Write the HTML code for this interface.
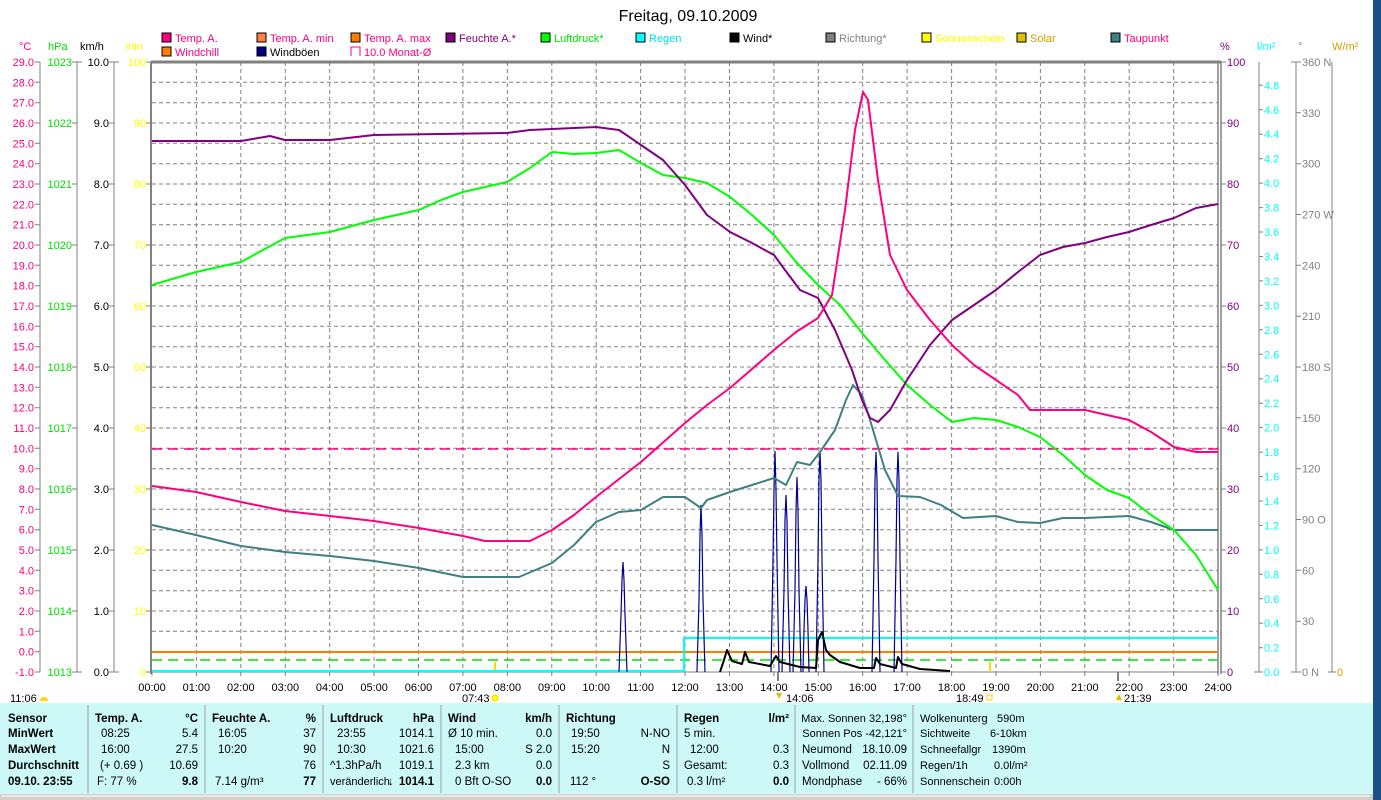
<!DOCTYPE html>
<html><head><meta charset="utf-8">
<style>
html,body{margin:0;padding:0;width:1381px;height:800px;overflow:hidden;background:#fff}
svg{display:block;font-family:"Liberation Sans",sans-serif}
</style></head><body>
<svg width="1381" height="800" viewBox="0 0 1381 800" xmlns="http://www.w3.org/2000/svg">
<rect x="1373" y="0" width="8" height="800" fill="#1a4f88"/>
<text x="688" y="21" font-size="16" text-anchor="middle" fill="#000">Freitag, 09.10.2009</text>
<!-- legend -->
<g font-size="11">
<rect x="162" y="33" width="9" height="9" fill="#ff0080" stroke="#000"/><text x="175" y="42" fill="#ff0080">Temp. A.</text>
<rect x="257" y="33" width="9" height="9" fill="#ff8040" stroke="#000"/><text x="270" y="42" fill="#ff0080">Temp. A. min</text>
<rect x="351" y="33" width="9" height="9" fill="#ff8000" stroke="#000"/><text x="364" y="42" fill="#ff0080">Temp. A. max</text>
<rect x="446" y="33" width="9" height="9" fill="#800080" stroke="#000"/><text x="459" y="42" fill="#800080">Feuchte A.*</text>
<rect x="541" y="33" width="9" height="9" fill="#00ff00" stroke="#000"/><text x="554" y="42" fill="#00e000">Luftdruck*</text>
<rect x="636" y="33" width="9" height="9" fill="#00ffff" stroke="#000"/><text x="649" y="42" fill="#00e0e0">Regen</text>
<rect x="730" y="33" width="9" height="9" fill="#000" stroke="#000"/><text x="743" y="42" fill="#000">Wind*</text>
<rect x="826" y="33" width="9" height="9" fill="#808080" stroke="#000"/><text x="839" y="42" fill="#808080">Richtung*</text>
<rect x="922" y="33" width="9" height="9" fill="#ffff00" stroke="#000"/><text x="935" y="42" fill="#ffff00">Sonnenschein</text>
<rect x="1017" y="33" width="9" height="9" fill="#e0c000" stroke="#000"/><text x="1030" y="42" fill="#d0a000">Solar</text>
<rect x="1111" y="33" width="9" height="9" fill="#408080" stroke="#000"/><text x="1124" y="42" fill="#ff0080">Taupunkt</text>
<rect x="162" y="47" width="9" height="9" fill="#ff8000" stroke="#000"/><text x="175" y="56" fill="#ff0080">Windchill</text>
<rect x="257" y="47" width="9" height="9" fill="#000080" stroke="#000"/><text x="270" y="56" fill="#000">Windböen</text>
<path d="M351 56V47h9v9" fill="none" stroke="#ff0080"/><text x="364" y="56" fill="#ff0080">10.0 Monat-Ø</text>
<text x="19" y="50" fill="#ff0080">°C</text><text x="48" y="50" fill="#00e000">hPa</text><text x="80" y="50" fill="#000">km/h</text><text x="125" y="50" fill="#ffff00">min</text>
<text x="1220" y="50" fill="#800080">%</text><text x="1257" y="50" fill="#00ffff">l/m²</text><text x="1298" y="50" fill="#808080">°</text><text x="1332" y="50" fill="#d0a000">W/m²</text>
</g>
<!-- grid -->
<g stroke="#808080" stroke-dasharray="4,3" stroke-width="1">
<path d="M152 82.3H1218M152 102.7H1218M152 123H1218M152 143.3H1218M152 163.7H1218M152 184H1218M152 204.3H1218M152 224.7H1218M152 245H1218M152 265.3H1218M152 285.7H1218M152 306H1218M152 326.3H1218M152 346.7H1218M152 367H1218M152 387.3H1218M152 407.7H1218M152 428H1218M152 448.3H1218M152 468.7H1218M152 489H1218M152 509.3H1218M152 529.7H1218M152 550H1218M152 570.3H1218M152 590.7H1218M152 611H1218M152 631.3H1218M152 651.7H1218"/>
<path d="M196.4 62V672M240.8 62V672M285.3 62V672M329.7 62V672M374.1 62V672M418.5 62V672M462.9 62V672M507.4 62V672M551.8 62V672M596.2 62V672M640.6 62V672M685 62V672M729.5 62V672M773.9 62V672M818.3 62V672M862.7 62V672M907.1 62V672M951.6 62V672M996 62V672M1040.4 62V672M1084.8 62V672M1129.2 62V672M1173.7 62V672"/>
</g>
<!-- axes -->
<g stroke="#808080" fill="none">
<path d="M151 62H1221" stroke-width="3"/>
<path d="M151 62V674" stroke-width="2"/>
<path d="M1218 62V674M1221 62V674" stroke-width="1.5"/>
<path d="M40 62V672M77 62V672M114 62V672M1259 62V672M1296 62V672M1332 62V672"/>
<path d="M152 672H1218"/>
<path d="M35 62h5M35 82.3h5M35 102.7h5M35 123h5M35 143.3h5M35 163.7h5M35 184h5M35 204.3h5M35 224.7h5M35 245h5M35 265.3h5M35 285.7h5M35 306h5M35 326.3h5M35 346.7h5M35 367h5M35 387.3h5M35 407.7h5M35 428h5M35 448.3h5M35 468.7h5M35 489h5M35 509.3h5M35 529.7h5M35 550h5M35 570.3h5M35 590.7h5M35 611h5M35 631.3h5M35 651.7h5M35 672h5"/>
<path d="M72 62h10M72 123h5M72 184h5M72 245h5M72 306h5M72 367h5M72 428h5M72 489h5M72 550h5M72 611h5M72 672h10"/>
<path d="M109 62h10M109 123h5M109 184h5M109 245h5M109 306h5M109 367h5M109 428h5M109 489h5M109 550h5M109 611h5M109 672h10"/>
<path d="M146 62h5M146 123h5M146 184h5M146 245h5M146 306h5M146 367h5M146 428h5M146 489h5M146 550h5M146 611h5M146 672h5"/>
<path d="M1221 62h5M1221 123h5M1221 184h5M1221 245h5M1221 306h5M1221 367h5M1221 428h5M1221 489h5M1221 550h5M1221 611h5M1221 672h5"/>
<path d="M1259 85.3h4M1259 109.8h4M1259 134.2h4M1259 158.7h4M1259 183.1h4M1259 207.6h4M1259 232h4M1259 256.5h4M1259 280.9h4M1259 305.4h4M1259 329.8h4M1259 354.3h4M1259 378.7h4M1259 403.2h4M1259 427.6h4M1259 452.1h4M1259 476.5h4M1259 501h4M1259 525.4h4M1259 549.9h4M1259 574.3h4M1259 598.8h4M1259 623.2h4M1259 647.7h4M1254 672h9"/>
<path d="M1291 62h10M1296 112.8h5M1296 163.7h5M1296 214.5h5M1296 265.3h5M1296 316.2h5M1296 367h5M1296 417.8h5M1296 468.7h5M1296 519.5h5M1296 570.3h5M1296 621.2h5M1291 672h10M1328 672h8"/>
<path d="M152 672v4M196.4 672v4M240.8 672v4M285.3 672v4M329.7 672v4M374.1 672v4M418.5 672v4M462.9 672v4M507.4 672v4M551.8 672v4M596.2 672v4M640.6 672v4M685 672v4M729.5 672v4M773.9 672v4M818.3 672v4M862.7 672v4M907.1 672v4M951.6 672v4M996 672v4M1040.4 672v4M1084.8 672v4M1129.2 672v4M1173.7 672v4M1218 672v4"/>
<path d="M778 672v9M1118 672v9" stroke-width="2"/>
</g>
<g font-size="11" text-anchor="end">
<g fill="#ff0080">
<text x="34" y="66">29.0</text><text x="34" y="86.3">28.0</text><text x="34" y="106.7">27.0</text><text x="34" y="127">26.0</text><text x="34" y="147.3">25.0</text><text x="34" y="167.7">24.0</text><text x="34" y="188">23.0</text><text x="34" y="208.3">22.0</text><text x="34" y="228.7">21.0</text><text x="34" y="249">20.0</text><text x="34" y="269.3">19.0</text><text x="34" y="289.7">18.0</text><text x="34" y="310">17.0</text><text x="34" y="330.3">16.0</text><text x="34" y="350.7">15.0</text><text x="34" y="371">14.0</text><text x="34" y="391.3">13.0</text><text x="34" y="411.7">12.0</text><text x="34" y="432">11.0</text><text x="34" y="452.3">10.0</text><text x="34" y="472.7">9.0</text><text x="34" y="493">8.0</text><text x="34" y="513.3">7.0</text><text x="34" y="533.7">6.0</text><text x="34" y="554">5.0</text><text x="34" y="574.3">4.0</text><text x="34" y="594.7">3.0</text><text x="34" y="615">2.0</text><text x="34" y="635.3">1.0</text><text x="34" y="655.7">0.0</text><text x="34" y="676">-1.0</text>
</g>
<g fill="#00e000">
<text x="72" y="66">1023</text><text x="72" y="127">1022</text><text x="72" y="188">1021</text><text x="72" y="249">1020</text><text x="72" y="310">1019</text><text x="72" y="371">1018</text><text x="72" y="432">1017</text><text x="72" y="493">1016</text><text x="72" y="554">1015</text><text x="72" y="615">1014</text><text x="72" y="676">1013</text>
</g>
<g fill="#000">
<text x="109" y="66">10.0</text><text x="109" y="127">9.0</text><text x="109" y="188">8.0</text><text x="109" y="249">7.0</text><text x="109" y="310">6.0</text><text x="109" y="371">5.0</text><text x="109" y="432">4.0</text><text x="109" y="493">3.0</text><text x="109" y="554">2.0</text><text x="109" y="615">1.0</text><text x="109" y="676">0.0</text>
</g>
<g fill="#ffff00">
<text x="146" y="66">100</text><text x="146" y="127">90</text><text x="146" y="188">80</text><text x="146" y="249">70</text><text x="146" y="310">60</text><text x="146" y="371">50</text><text x="146" y="432">40</text><text x="146" y="493">30</text><text x="146" y="554">20</text><text x="146" y="615">10</text><text x="146" y="676">0</text>
</g>
</g>
<g font-size="11">
<g fill="#800080">
<text x="1227" y="66">100</text><text x="1227" y="127">90</text><text x="1227" y="188">80</text><text x="1227" y="249">70</text><text x="1227" y="310">60</text><text x="1227" y="371">50</text><text x="1227" y="432">40</text><text x="1227" y="493">30</text><text x="1227" y="554">20</text><text x="1227" y="615">10</text><text x="1227" y="676">0</text>
</g>
<g fill="#00ffff">
<text x="1264" y="89.3">4.8</text><text x="1264" y="113.8">4.6</text><text x="1264" y="138.2">4.4</text><text x="1264" y="162.7">4.2</text><text x="1264" y="187.1">4.0</text><text x="1264" y="211.6">3.8</text><text x="1264" y="236">3.6</text><text x="1264" y="260.5">3.4</text><text x="1264" y="284.9">3.2</text><text x="1264" y="309.4">3.0</text><text x="1264" y="333.8">2.8</text><text x="1264" y="358.3">2.6</text><text x="1264" y="382.7">2.4</text><text x="1264" y="407.2">2.2</text><text x="1264" y="431.6">2.0</text><text x="1264" y="456.1">1.8</text><text x="1264" y="480.5">1.6</text><text x="1264" y="505">1.4</text><text x="1264" y="529.4">1.2</text><text x="1264" y="553.9">1.0</text><text x="1264" y="578.3">0.8</text><text x="1264" y="602.8">0.6</text><text x="1264" y="627.2">0.4</text><text x="1264" y="651.7">0.2</text><text x="1264" y="676">0.0</text>
</g>
<g fill="#808080">
<text x="1302" y="66">360 N</text><text x="1302" y="116.8">330</text><text x="1302" y="167.7">300</text><text x="1302" y="218.5">270 W</text><text x="1302" y="269.3">240</text><text x="1302" y="320.2">210</text><text x="1302" y="371">180 S</text><text x="1302" y="421.8">150</text><text x="1302" y="472.7">120</text><text x="1302" y="523.5">90 O</text><text x="1302" y="574.3">60</text><text x="1302" y="625.2">30</text><text x="1302" y="676">0 N</text>
</g>
<text x="1337" y="676" fill="#d0a000">0</text>
</g>
<!-- hour labels -->
<g font-size="11" text-anchor="middle" fill="#000">
<text x="152" y="691">00:00</text><text x="196.4" y="691">01:00</text><text x="240.8" y="691">02:00</text><text x="285.3" y="691">03:00</text><text x="329.7" y="691">04:00</text><text x="374.1" y="691">05:00</text><text x="418.5" y="691">06:00</text><text x="462.9" y="691">07:00</text><text x="507.4" y="691">08:00</text><text x="551.8" y="691">09:00</text><text x="596.2" y="691">10:00</text><text x="640.6" y="691">11:00</text><text x="685" y="691">12:00</text><text x="729.5" y="691">13:00</text><text x="773.9" y="691">14:00</text><text x="818.3" y="691">15:00</text><text x="862.7" y="691">16:00</text><text x="907.1" y="691">17:00</text><text x="951.6" y="691">18:00</text><text x="996" y="691">19:00</text><text x="1040.4" y="691">20:00</text><text x="1084.8" y="691">21:00</text><text x="1129.2" y="691">22:00</text><text x="1173.7" y="691">23:00</text><text x="1218" y="691">24:00</text>
</g>
<g font-size="11" fill="#000">
<text x="10" y="702">11:06</text><path d="M40 701a4 4 0 0 1 8 0z" fill="#ffd800"/>
<text x="462" y="702">07:43</text><circle cx="495" cy="698" r="3" fill="#ffff00" stroke="#ffd000"/>
<text x="786" y="702">14:06</text><path d="M776 693l3 6 3-6z" fill="#e0c000"/>
<text x="956" y="702">18:49</text><rect x="987" y="695" width="5" height="5" fill="none" stroke="#ffd000"/>
<text x="1124" y="702">21:39</text><path d="M1116 700l3-6 3 6z" fill="#e0c000"/>
</g>
<rect x="494" y="662" width="2" height="10" fill="#ffd800"/><rect x="989" y="662" width="2" height="10" fill="#ffd800"/>
<!-- reference lines -->
<path d="M152 449H1218" stroke="#ff0080" stroke-dasharray="10,6" stroke-width="1.5"/>
<path d="M152 652H1218" stroke="#ff8000" stroke-width="2"/>
<path d="M152 660H1218" stroke="#00e000" stroke-dasharray="10,6" stroke-width="1.5"/>
<path d="M152 671H684V638H1218" stroke="#00ffff" fill="none" stroke-width="2"/>
<!-- gust spikes -->
<g fill="none" stroke="#000090" stroke-width="1.2">
<path d="M619 672L621 615 622 580 623 562 624 580 625 615 627 672"/>
<path d="M697 672L699 600 700 535 701 505 702 535 703 600 705 672"/>
<path d="M771 672L773 560 774 490 775 451 776 490 777 560 779 672"/>
<path d="M782 672L784 590 785 520 786 495 787 520 788 590 790 672"/>
<path d="M793 672L795 590 796 510 797 477 798 510 799 590 801 672"/>
<path d="M803 672L804 630 805 600 806 586 807 600 808 630 809 672"/>
<path d="M816 672L818 560 819 480 820 452 821 480 822 560 824 672"/>
<path d="M872 672L874 560 875 480 876 452 877 480 878 560 880 672"/>
<path d="M894 672L896 560 897 480 898 452 899 480 900 560 902 672"/>
</g>
<!-- curves -->
<g fill="none" stroke-width="2" stroke-linejoin="round">
<polyline stroke="#408080" points="152,525 196,535 241,546 285,552 330,556 374,561 419,568 463,577 485,577 519,577 552,563 574,545 596,522 619,512 641,510 663,497 685,497 701,508 707,500 730,492 752,485 774,478 786,485 797,462 810,465 820,452 835,430 846,400 853,385 862,395 870,420 885,470 898,496 920,497 941,505 963,518 996,516 1018,522 1040,523 1063,518 1085,518 1107,517 1129,516 1151,522 1174,530 1196,530 1218,530"/>
<polyline stroke="#00ff00" points="152,285 196,272 241,262 285,238 330,232 374,220 419,210 441,200 463,192 507,182 530,168 552,152 574,154 596,153 619,150 641,163 663,175 685,178 707,183 730,197 752,215 774,235 796,262 818,285 840,305 862,333 885,360 907,385 930,405 952,422 974,418 996,420 1018,427 1040,437 1063,455 1085,475 1107,490 1129,498 1151,515 1174,530 1196,555 1218,590"/>
<polyline stroke="#800080" points="152,141 241,141 270,136 285,140 330,140 374,135 507,133 530,130 596,127 619,130 641,145 663,160 685,185 707,215 730,232 752,243 774,255 785,270 800,290 818,298 835,330 852,370 862,400 870,418 878,422 890,410 907,380 930,345 952,320 974,305 996,290 1018,272 1040,255 1063,247 1085,243 1107,237 1129,232 1151,225 1174,218 1196,208 1218,204"/>
<polyline stroke="#ff0080" points="152,486 196,492 241,502 285,511 330,516 374,521 419,528 463,536 485,541 507,541 530,541 552,530 574,515 596,497 641,462 685,423 707,405 730,388 774,350 796,332 818,318 832,295 845,210 855,130 863,92 868,100 878,180 890,255 907,290 930,320 952,345 974,365 996,380 1018,395 1030,410 1085,410 1107,415 1129,420 1151,432 1174,447 1196,452 1218,452"/>
<polyline stroke="#000" points="720,672 724,660 727,650 732,661 742,664 745,652 749,662 770,666 776,656 780,662 800,667 816,668 818,640 822,632 826,650 830,655 840,662 860,668 874,668 876,658 880,664 896,668 898,657 902,664 920,669 950,671"/>
</g>
<!-- bottom panel -->
<rect x="0" y="703" width="1373" height="91" fill="#ccf8f8"/>
<rect x="0" y="794" width="1373" height="6" fill="#d4d0c8"/>
<path d="M2 796H1370" stroke="#fff"/>
<g stroke="#a0a0a0"><path d="M88 705V793M205 705V793M323 705V793M441 705V793M559 705V793M677 705V793M795 705V793M913 705V793"/></g>
<g font-size="11.5" fill="#000">
<g font-weight="bold"><text x="8" y="722">Sensor</text><text x="8" y="737">MinWert</text><text x="8" y="753">MaxWert</text><text x="8" y="769">Durchschnitt</text><text x="8" y="785">09.10. 23:55</text>
<text x="95" y="722">Temp. A.</text><text x="212" y="722">Feuchte A.</text><text x="330" y="722">Luftdruck</text><text x="448" y="722">Wind</text><text x="566" y="722">Richtung</text><text x="684" y="722">Regen</text></g>
<g font-weight="bold" text-anchor="end"><text x="198" y="722">°C</text><text x="316" y="722">%</text><text x="434" y="722">hPa</text><text x="552" y="722">km/h</text><text x="789" y="722">l/m²</text>
<text x="198" y="785">9.8</text><text x="316" y="785">77</text><text x="434" y="785">1014.1</text><text x="552" y="785">0.0</text><text x="670" y="785">O-SO</text><text x="789" y="785">0.0</text></g>
<text x="101" y="737">08:25</text><text x="101" y="753">16:00</text><text x="100" y="769">(+ 0.69 )</text><text x="97" y="785">F: 77 %</text>
<text x="218" y="737">16:05</text><text x="218" y="753">10:20</text><text x="215" y="785">7.14 g/m³</text>
<text x="337" y="737">23:55</text><text x="337" y="753">10:30</text><text x="330" y="769">^1.3hPa/h</text><text x="330" y="785" font-size="11">veränderlich</text><text x="388" y="785" font-weight="bold">↓</text>
<text x="448" y="737">Ø 10 min.</text><text x="455" y="753">15:00</text><text x="455" y="769">2.3 km</text><text x="455" y="785">0 Bft O-SO</text>
<text x="571" y="737">19:50</text><text x="571" y="753">15:20</text><text x="570" y="785">112 °</text>
<text x="684" y="737">5 min.</text><text x="690" y="753">12:00</text><text x="684" y="769">Gesamt:</text><text x="687" y="785">0.3 l/m²</text>
<g text-anchor="end"><text x="198" y="737">5.4</text><text x="198" y="753">27.5</text><text x="198" y="769">10.69</text>
<text x="316" y="737">37</text><text x="316" y="753">90</text><text x="316" y="769">76</text>
<text x="434" y="737">1014.1</text><text x="434" y="753">1021.6</text><text x="434" y="769">1019.1</text>
<text x="552" y="737">0.0</text><text x="552" y="753">S 2.0</text><text x="552" y="769">0.0</text>
<text x="670" y="737">N-NO</text><text x="670" y="753">N</text><text x="670" y="769">S</text>
<text x="789" y="753">0.3</text><text x="789" y="769">0.3</text>
<text x="907" y="722" font-size="11">Max. Sonnen 32,198°</text><text x="907" y="737" font-size="11">Sonnen Pos -42,121°</text><text x="907" y="769">02.11.09</text><text x="907" y="753">18.10.09</text><text x="907" y="785">- 66%</text></g>
<text x="802" y="753">Neumond</text><text x="802" y="769">Vollmond</text><text x="802" y="785">Mondphase</text>
<g font-size="11"><text x="920" y="722">Wolkenunterg</text><text x="920" y="737">Sichtweite</text><text x="920" y="753">Schneefallgr</text><text x="920" y="769">Regen/1h</text><text x="920" y="785">Sonnenschein</text>
<text x="997" y="722">590m</text><text x="990" y="737">6-10km</text><text x="992" y="753">1390m</text><text x="994" y="769">0.0l/m²</text><text x="994" y="785">0:00h</text></g>
</g>
</svg>
</body></html>
